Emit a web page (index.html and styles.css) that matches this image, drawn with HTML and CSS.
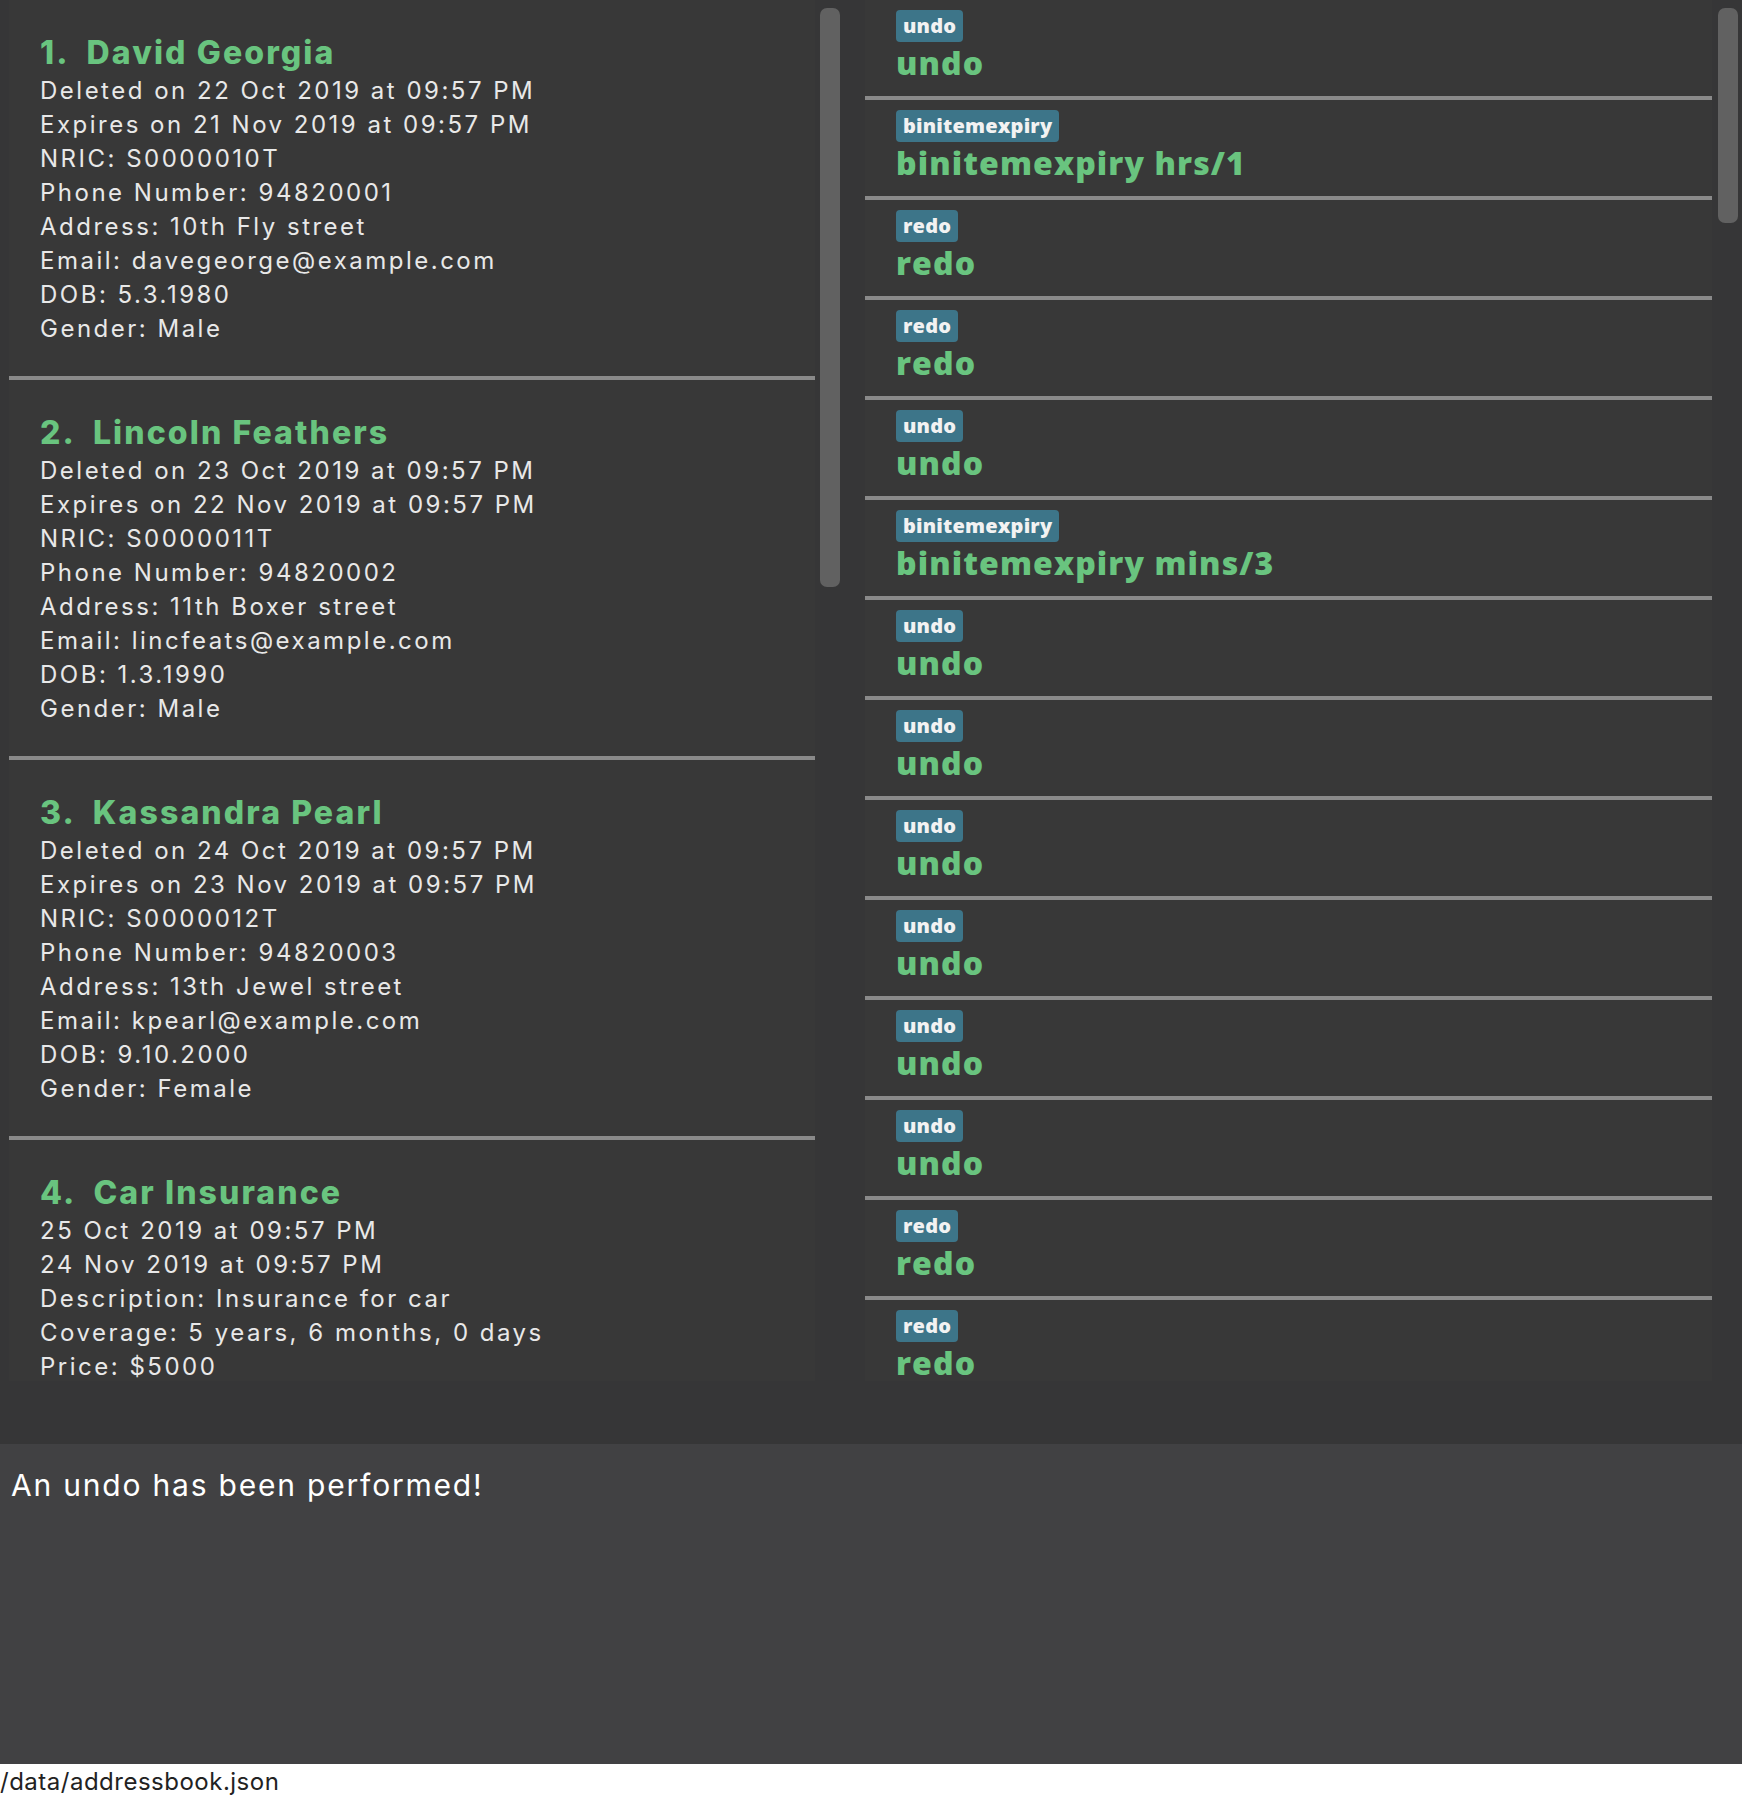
FILE: index.html
```html
<!DOCTYPE html>
<html lang="en">
<head>
<meta charset="utf-8">
<title>Bin</title>
<link rel="stylesheet" href="styles.css">
</head>
<body>
<div class="app">
  <div class="panes">
    <div class="pane pane-left">
      <div class="list list-left">
        <div class="card">
          <div class="card-title"><span class="idx">1.</span>David Georgia</div>
          <div class="line">Deleted on 22 Oct 2019 at 09:57 PM</div>
          <div class="line">Expires on 21 Nov 2019 at 09:57 PM</div>
          <div class="line">NRIC: S0000010T</div>
          <div class="line">Phone Number: 94820001</div>
          <div class="line">Address: 10th Fly street</div>
          <div class="line">Email: davegeorge@example.com</div>
          <div class="line">DOB: 5.3.1980</div>
          <div class="line">Gender: Male</div>
        </div>
        <div class="card">
          <div class="card-title"><span class="idx">2.</span>Lincoln Feathers</div>
          <div class="line">Deleted on 23 Oct 2019 at 09:57 PM</div>
          <div class="line">Expires on 22 Nov 2019 at 09:57 PM</div>
          <div class="line">NRIC: S0000011T</div>
          <div class="line">Phone Number: 94820002</div>
          <div class="line">Address: 11th Boxer street</div>
          <div class="line">Email: lincfeats@example.com</div>
          <div class="line">DOB: 1.3.1990</div>
          <div class="line">Gender: Male</div>
        </div>
        <div class="card">
          <div class="card-title"><span class="idx">3.</span>Kassandra Pearl</div>
          <div class="line">Deleted on 24 Oct 2019 at 09:57 PM</div>
          <div class="line">Expires on 23 Nov 2019 at 09:57 PM</div>
          <div class="line">NRIC: S0000012T</div>
          <div class="line">Phone Number: 94820003</div>
          <div class="line">Address: 13th Jewel street</div>
          <div class="line">Email: kpearl@example.com</div>
          <div class="line">DOB: 9.10.2000</div>
          <div class="line">Gender: Female</div>
        </div>
        <div class="card">
          <div class="card-title"><span class="idx">4.</span>Car Insurance</div>
          <div class="line">25 Oct 2019 at 09:57 PM</div>
          <div class="line">24 Nov 2019 at 09:57 PM</div>
          <div class="line">Description: Insurance for car</div>
          <div class="line">Coverage: 5 years, 6 months, 0 days</div>
          <div class="line">Price: $5000</div>
        </div>
      </div>
      <div class="scrollbar"><div class="thumb thumb-left"></div></div>
    </div>
    <div class="pane pane-right">
      <div class="list list-right">
        <div class="row"><span class="badge">undo</span><div class="cmd">undo</div></div>
        <div class="row"><span class="badge">binitemexpiry</span><div class="cmd">binitemexpiry hrs/1</div></div>
        <div class="row"><span class="badge">redo</span><div class="cmd">redo</div></div>
        <div class="row"><span class="badge">redo</span><div class="cmd">redo</div></div>
        <div class="row"><span class="badge">undo</span><div class="cmd">undo</div></div>
        <div class="row"><span class="badge">binitemexpiry</span><div class="cmd">binitemexpiry mins/3</div></div>
        <div class="row"><span class="badge">undo</span><div class="cmd">undo</div></div>
        <div class="row"><span class="badge">undo</span><div class="cmd">undo</div></div>
        <div class="row"><span class="badge">undo</span><div class="cmd">undo</div></div>
        <div class="row"><span class="badge">undo</span><div class="cmd">undo</div></div>
        <div class="row"><span class="badge">undo</span><div class="cmd">undo</div></div>
        <div class="row"><span class="badge">undo</span><div class="cmd">undo</div></div>
        <div class="row"><span class="badge">redo</span><div class="cmd">redo</div></div>
        <div class="row"><span class="badge">redo</span><div class="cmd">redo</div></div>
      </div>
      <div class="scrollbar"><div class="thumb thumb-right"></div></div>
    </div>
  </div>
  <div class="result">An undo has been performed!</div>
  <div class="status">/data/addressbook.json</div>
</div>
</body>
</html>
```

FILE: styles.css
```css
* { box-sizing: border-box; }

html, body {
  margin: 0;
  padding: 0;
  background: #363637;
}

.app {
  width: 1742px;
  height: 1800px;
  display: flex;
  flex-direction: column;
  overflow: hidden;
}

.panes {
  height: 1444px;
  display: flex;
  background: #363637;
}

.pane {
  display: flex;
  align-items: flex-start;
  height: 1444px;
}

.pane-left {
  width: 840px;
  padding-left: 9px;
}

.pane-right {
  flex: 1;
  padding-left: 25px;
}

.list {
  height: 1381px;
  background: #383838;
}

.list-left {
  width: 806px;
  margin-right: 5px;
}

.list-right {
  width: 847px;
  margin-right: 6px;
}

.scrollbar {
  width: 20px;
  padding-top: 8px;
}

.thumb {
  width: 20px;
  background: #616161;
  border-radius: 7px;
}

.thumb-left { height: 579px; }
.thumb-right { height: 215px; }

/* left cards */
.card {
  padding: 32px 0 30px 31px;
  border-bottom: 4px solid #8a8a8a;
  font-family: "Inter", "Liberation Sans", sans-serif;
}

.card:last-child {
  padding-bottom: 0;
  border-bottom: none;
}

.card-title {
  font-size: 32px;
  line-height: 42px;
  font-weight: 800;
  letter-spacing: 2.1px;
  color: #69c47f;
  white-space: nowrap;
}

.idx {
  display: inline-block;
  margin-right: 17px;
}

.line {
  font-size: 24px;
  line-height: 34px;
  letter-spacing: 2.5px;
  color: #e8e8e8;
  white-space: nowrap;
}

/* right rows */
.row {
  padding: 10px 0 16px 31px;
  border-bottom: 4px solid #8a8a8a;
  font-family: "Open Sans", "Liberation Sans", sans-serif;
}

.row:last-child {
  padding-bottom: 0;
  border-bottom: none;
}

.badge {
  display: inline-block;
  height: 32px;
  padding: 0 7px;
  background: #3d7589;
  border-radius: 4px;
  color: #f2f2f2;
  font-size: 20px;
  line-height: 32px;
  font-weight: 800;
  letter-spacing: 0.2px;
  vertical-align: top;
}

.cmd {
  margin-top: 4px;
  font-size: 32px;
  line-height: 34px;
  font-weight: 800;
  letter-spacing: 1.1px;
  color: #69c47f;
  white-space: nowrap;
}

/* result box */
.result {
  height: 320px;
  background: #414143;
  padding: 23px 0 0 11px;
  font-family: "Inter", "Liberation Sans", sans-serif;
  font-size: 30px;
  line-height: 36px;
  letter-spacing: 1.8px;
  color: #ffffff;
}

.status {
  height: 36px;
  background: #ffffff;
  font-family: "Inter", "Liberation Sans", sans-serif;
  font-size: 24px;
  line-height: 36px;
  letter-spacing: 0.5px;
  color: #222222;
  white-space: nowrap;
}
```
